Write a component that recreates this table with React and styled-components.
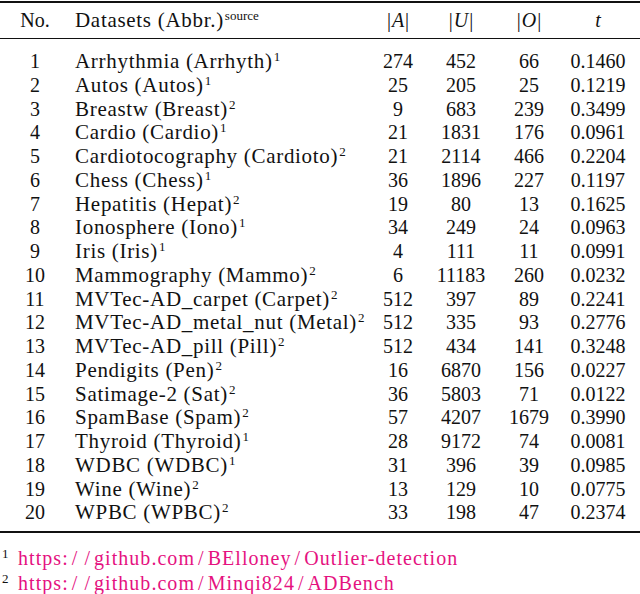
import React from "react";
import styled, { createGlobalStyle } from "styled-components";

const rows = [
  ["Arrhythmia (Arrhyth)", 1, 274, 452, 66, "0.1460"],
  ["Autos (Autos)", 1, 25, 205, 25, "0.1219"],
  ["Breastw (Breast)", 2, 9, 683, 239, "0.3499"],
  ["Cardio (Cardio)", 1, 21, 1831, 176, "0.0961"],
  ["Cardiotocography (Cardioto)", 2, 21, 2114, 466, "0.2204"],
  ["Chess (Chess)", 1, 36, 1896, 227, "0.1197"],
  ["Hepatitis (Hepat)", 2, 19, 80, 13, "0.1625"],
  ["Ionosphere (Iono)", 1, 34, 249, 24, "0.0963"],
  ["Iris (Iris)", 1, 4, 111, 11, "0.0991"],
  ["Mammography (Mammo)", 2, 6, 11183, 260, "0.0232"],
  ["MVTec-AD_carpet (Carpet)", 2, 512, 397, 89, "0.2241"],
  ["MVTec-AD_metal_nut (Metal)", 2, 512, 335, 93, "0.2776"],
  ["MVTec-AD_pill (Pill)", 2, 512, 434, 141, "0.3248"],
  ["Pendigits (Pen)", 2, 16, 6870, 156, "0.0227"],
  ["Satimage-2 (Sat)", 2, 36, 5803, 71, "0.0122"],
  ["SpamBase (Spam)", 2, 57, 4207, 1679, "0.3990"],
  ["Thyroid (Thyroid)", 1, 28, 9172, 74, "0.0081"],
  ["WDBC (WDBC)", 1, 31, 396, 39, "0.0985"],
  ["Wine (Wine)", 2, 13, 129, 10, "0.0775"],
  ["WPBC (WPBC)", 2, 33, 198, 47, "0.2374"],
];

const links = [
  ["1", ["https:", "", "github.com", "BElloney", "Outlier-detection"]],
  ["2", ["https:", "", "github.com", "Minqi824", "ADBench"]],
];

const GlobalStyle = createGlobalStyle`
  body {
    margin: 0;
    background: #fff;
    color: #111;
    font-family: "Liberation Serif", "Times New Roman", serif;
  }
`;

const Page = styled.div`
  width: 640px;
  padding-top: 1px;
`;

const Rule = styled.div`
  height: ${(p) => p.$w}px;
  background: #111;
`;

const Grid = styled.div`
  display: grid;
  grid-template-columns: 70px 300px 56px 70px 66px 72px;
  font-size: 20px;
  line-height: 23.75px;
`;

const HeadRow = styled(Grid)`
  height: 35px;
  align-items: center;
`;

const Body = styled.div`
  padding: 11px 0 6px;
`;

const Cell = styled.div`
  text-align: ${(p) => (p.$left ? "left" : "center")};
  padding-left: ${(p) => (p.$left ? "5px" : "0")};
  font-size: ${(p) => (p.$left ? "21px" : "inherit")};
  letter-spacing: ${(p) => (p.$left ? "0.7px" : "0")};
  white-space: nowrap;
`;

const Sup = styled.sup`
  font-size: 13px;
  line-height: 0;
  vertical-align: 7px;
  margin-left: 1px;
  letter-spacing: 0;
`;

const Math = styled.span`
  i {
    font-style: italic;
    padding: 0 1px;
  }
`;

const Notes = styled.div`
  padding-top: 14px;
  font-size: 20px;
  line-height: 23px;
`;

const Note = styled.div`
  display: flex;
  align-items: baseline;
`;

const NoteMark = styled.span`
  width: 16px;
  padding-left: 2px;
  font-size: 13px;
  position: relative;
  top: -7px;
`;

const Link = styled.a`
  color: #e5127f;
  text-decoration: none;
  letter-spacing: 1.05px;
`;

const Slash = styled.span`
  margin: 0 3px;
`;

const Abs = ({ v }) => (
  <Math>
    |<i>{v}</i>|
  </Math>
);

const Url = ({ parts }) => (
  <Link href="#">
    {parts.map((p, i) => (
      <React.Fragment key={i}>
        {i > 0 && <Slash>/</Slash>}
        {p}
      </React.Fragment>
    ))}
  </Link>
);

export default function App() {
  return (
    <Page>
      <GlobalStyle />
      <Rule $w={2} />
      <HeadRow>
        <Cell>No.</Cell>
        <Cell $left>
          Datasets (Abbr.)<Sup>source</Sup>
        </Cell>
        <Cell>
          <Abs v="A" />
        </Cell>
        <Cell>
          <Abs v="U" />
        </Cell>
        <Cell>
          <Abs v="O" />
        </Cell>
        <Cell>
          <i>t</i>
        </Cell>
      </HeadRow>
      <Rule $w={1} />
      <Body>
        {rows.map((r, i) => (
          <Grid key={r[0]}>
            <Cell>{i + 1}</Cell>
            <Cell $left>
              {r[0]}
              <Sup>{r[1]}</Sup>
            </Cell>
            <Cell>{r[2]}</Cell>
            <Cell>{r[3]}</Cell>
            <Cell>{r[4]}</Cell>
            <Cell>{r[5]}</Cell>
          </Grid>
        ))}
      </Body>
      <Rule $w={2} />
      <Notes>
        {links.map(([mark, parts]) => (
          <Note key={mark}>
            <NoteMark>{mark}</NoteMark>
            <Url parts={parts} />
          </Note>
        ))}
      </Notes>
    </Page>
  );
}
